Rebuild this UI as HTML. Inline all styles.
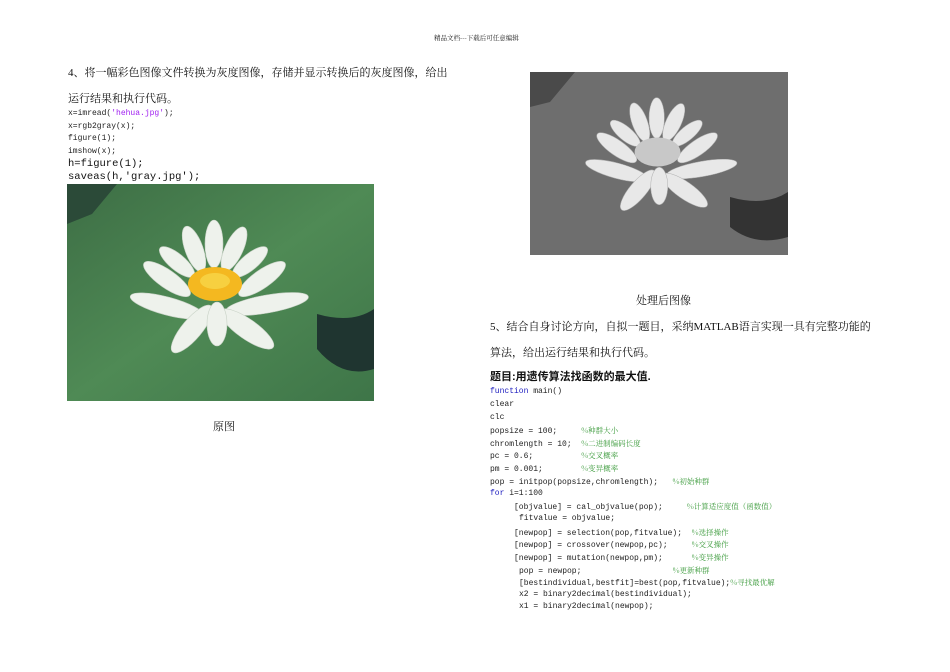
<!DOCTYPE html>
<html><head><meta charset="utf-8"><style>
body{margin:0;width:950px;height:672px;background:#fff;position:relative;overflow:hidden;font-family:"Liberation Serif","Noto Serif CJK SC",serif;color:#111}
.a{position:absolute;white-space:pre}
.m{font-family:"Liberation Mono",monospace;font-size:8px;color:#222}
.m2{font-family:"Liberation Mono",monospace;font-size:10.5px;color:#111}
.cn{font-family:"Liberation Serif","Noto Serif CJK SC",serif;font-size:11px}
.c{color:#3a9a3a;font-family:"Noto Serif CJK SC",serif;font-size:7.5px}
.k{color:#2020c0}
</style></head><body>
<div class="a" style="left:434px;top:33px;font-size:6.5px;font-family:'Noto Serif CJK SC',serif">精品文档---下载后可任意编辑</div>
<div class="a cn" style="left:68px;top:64px">4、将一幅彩色图像文件转换为灰度图像，存储并显示转换后的灰度图像，给出</div>
<div class="a cn" style="left:68px;top:90px">运行结果和执行代码。</div>
<div class="a m" style="left:68px;top:109px">x=imread(<span style="color:#a020f0">'hehua.jpg'</span>);</div>
<div class="a m" style="left:68px;top:122px">x=rgb2gray(x);</div>
<div class="a m" style="left:68px;top:134px">figure(1);</div>
<div class="a m" style="left:68px;top:147px">imshow(x);</div>
<div class="a m2" style="left:68px;top:158px">h=figure(1);</div>
<div class="a m2" style="left:68px;top:171px">saveas(h,'gray.jpg');</div>

<svg class="a" style="left:67px;top:184px" width="307" height="217" viewBox="0 0 307 217">
<defs><linearGradient id="g1" x1="0" y1="0" x2="1" y2="1"><stop offset="0" stop-color="#3d6e45"/><stop offset=".5" stop-color="#4f8a55"/><stop offset="1" stop-color="#3e7548"/></linearGradient></defs>
<rect width="307" height="217" fill="url(#g1)"/>
<path d="M0 0 L50 0 L25 30 L0 40Z" fill="#2b4a38"/>
<path d="M250 130 Q285 140 307 125 L307 185 Q275 195 250 165Z" fill="#1f3530"/>
<g transform="translate(145,100)">
<g fill="#eef2ec" stroke="#c8d2c6" stroke-width=".6">
<ellipse cx="-45" cy="22" rx="38" ry="9" transform="rotate(15 -45 22)"/>
<ellipse cx="55" cy="20" rx="42" ry="9" transform="rotate(-10 55 20)"/>
<ellipse cx="-20" cy="45" rx="30" ry="10" transform="rotate(-50 -20 45)"/>
<ellipse cx="35" cy="45" rx="32" ry="10" transform="rotate(35 35 45)"/>
<ellipse cx="5" cy="40" rx="10" ry="22"/>
<ellipse cx="-45" cy="-5" rx="28" ry="9" transform="rotate(35 -45 -5)"/>
<ellipse cx="50" cy="-5" rx="28" ry="9" transform="rotate(-35 50 -5)"/>
<ellipse cx="-18" cy="-35" rx="9" ry="24" transform="rotate(-20 -18 -35)"/>
<ellipse cx="22" cy="-35" rx="9" ry="24" transform="rotate(25 22 -35)"/>
<ellipse cx="2" cy="-40" rx="9" ry="24"/>
<ellipse cx="-35" cy="-22" rx="8" ry="22" transform="rotate(-50 -35 -22)"/>
<ellipse cx="38" cy="-22" rx="8" ry="22" transform="rotate(50 38 -22)"/>
</g>
<ellipse cx="3" cy="0" rx="27" ry="17" fill="#f4b820"/>
<ellipse cx="3" cy="-3" rx="15" ry="8" fill="#f7d040"/>
</g>
</svg>
<div class="a cn" style="left:213px;top:418px">原图</div>

<svg class="a" style="left:530px;top:72px" width="258" height="183" viewBox="0 0 258 183">
<rect width="258" height="183" fill="#6e6e6e"/>
<path d="M0 0 L45 0 L20 30 L0 35Z" fill="#4a4a4a"/>
<path d="M200 125 Q235 135 258 120 L258 165 Q225 175 200 155Z" fill="#333"/>
<g transform="translate(125,80) scale(.85)">
<g fill="#e8e8e8" stroke="#b0b0b0" stroke-width=".6">
<ellipse cx="-45" cy="22" rx="38" ry="9" transform="rotate(15 -45 22)"/>
<ellipse cx="55" cy="20" rx="42" ry="9" transform="rotate(-10 55 20)"/>
<ellipse cx="-20" cy="45" rx="30" ry="10" transform="rotate(-50 -20 45)"/>
<ellipse cx="35" cy="45" rx="32" ry="10" transform="rotate(35 35 45)"/>
<ellipse cx="5" cy="40" rx="10" ry="22"/>
<ellipse cx="-45" cy="-5" rx="28" ry="9" transform="rotate(35 -45 -5)"/>
<ellipse cx="50" cy="-5" rx="28" ry="9" transform="rotate(-35 50 -5)"/>
<ellipse cx="-18" cy="-35" rx="9" ry="24" transform="rotate(-20 -18 -35)"/>
<ellipse cx="22" cy="-35" rx="9" ry="24" transform="rotate(25 22 -35)"/>
<ellipse cx="2" cy="-40" rx="9" ry="24"/>
<ellipse cx="-35" cy="-22" rx="8" ry="22" transform="rotate(-50 -35 -22)"/>
<ellipse cx="38" cy="-22" rx="8" ry="22" transform="rotate(50 38 -22)"/>
</g>
<ellipse cx="3" cy="0" rx="27" ry="17" fill="#c8c8c8"/>
</g>
</svg>
<div class="a cn" style="left:636px;top:292px">处理后图像</div>
<div class="a cn" style="left:490px;top:318px">5、结合自身讨论方向，自拟一题目，采纳MATLAB语言实现一具有完整功能的</div>
<div class="a cn" style="left:490px;top:344px">算法，给出运行结果和执行代码。</div>
<div class="a" style="left:490px;top:368px;font-family:'Liberation Sans','Noto Sans CJK SC',sans-serif;font-weight:bold;font-size:11px">题目:用遗传算法找函数的最大值.</div>
<div class="a m" style="left:490px;top:387px"><span class="k">function</span> main()</div>
<div class="a m" style="left:490px;top:400px">clear</div>
<div class="a m" style="left:490px;top:413px">clc</div>
<div class="a m" style="left:490px;top:425px">popsize = 100;     <span class="c">%种群大小</span></div>
<div class="a m" style="left:490px;top:438px">chromlength = 10;  <span class="c">%二进制编码长度</span></div>
<div class="a m" style="left:490px;top:450px">pc = 0.6;          <span class="c">%交叉概率</span></div>
<div class="a m" style="left:490px;top:463px">pm = 0.001;        <span class="c">%变异概率</span></div>
<div class="a m" style="left:490px;top:476px">pop = initpop(popsize,chromlength);   <span class="c">%初始种群</span></div>
<div class="a m" style="left:490px;top:489px"><span class="k">for</span> i=1:100</div>
<div class="a m" style="left:514px;top:501px">[objvalue] = cal_objvalue(pop);     <span class="c">%计算适应度值（函数值）</span></div>
<div class="a m" style="left:519px;top:514px">fitvalue = objvalue;</div>
<div class="a m" style="left:514px;top:527px">[newpop] = selection(pop,fitvalue);  <span class="c">%选择操作</span></div>
<div class="a m" style="left:514px;top:539px">[newpop] = crossover(newpop,pc);     <span class="c">%交叉操作</span></div>
<div class="a m" style="left:514px;top:552px">[newpop] = mutation(newpop,pm);      <span class="c">%变异操作</span></div>
<div class="a m" style="left:519px;top:565px">pop = newpop;                   <span class="c">%更新种群</span></div>
<div class="a m" style="left:519px;top:577px">[bestindividual,bestfit]=best(pop,fitvalue);<span class="c">%寻找最优解</span></div>
<div class="a m" style="left:519px;top:590px">x2 = binary2decimal(bestindividual);</div>
<div class="a m" style="left:519px;top:602px">x1 = binary2decimal(newpop);</div>
</body></html>
